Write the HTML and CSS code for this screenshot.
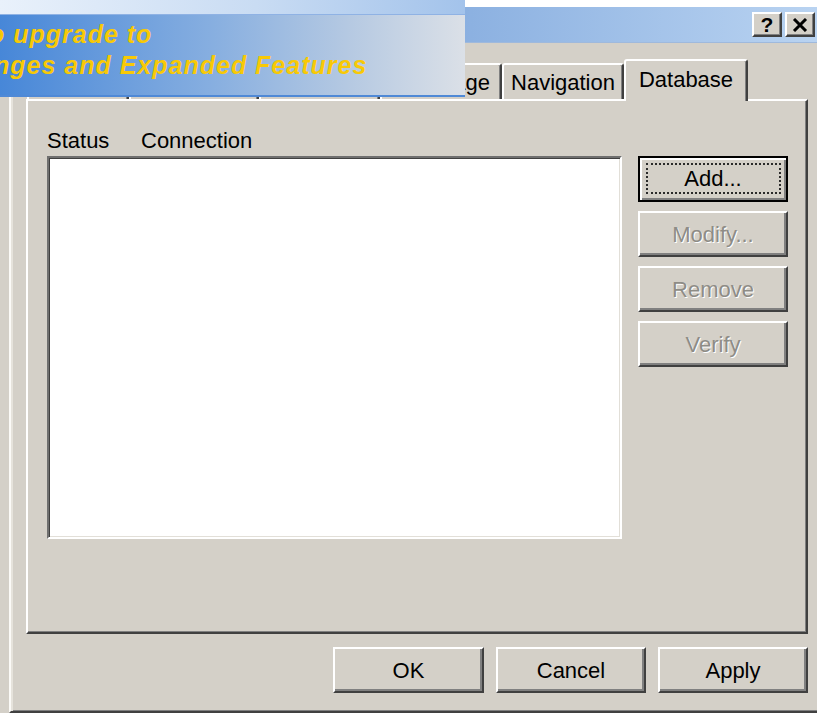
FILE: index.html
```html
<!DOCTYPE html>
<html lang="en">
<head>
<meta charset="utf-8">
<title>Properties</title>
<link rel="stylesheet" href="styles.css">
</head>
<body>
<div class="desk-strip"></div>

<div class="window">
  <div class="titlebar">
    <button class="cap-btn help" type="button">?</button>
    <button class="cap-btn close" type="button" aria-label="Close">
      <svg width="16" height="14" viewBox="0 0 16 14"><path d="M2 1 L14 13 M14 1 L2 13" stroke="#000" stroke-width="3" fill="none"/></svg>
    </button>
  </div>

  <div class="window-body">
    <div class="tabs">
      <div class="tab w1"></div>
      <div class="tab w2"></div>
      <div class="tab w3"></div>
      <div class="tab w4">Language</div>
      <div class="tab w5">Navigation</div>
      <div class="tab w6 active">Database</div>
    </div>

    <div class="panel">
      <div class="list-head">
        <span class="col-status">Status</span>
        <span>Connection</span>
      </div>
      <div class="listbox"></div>
      <div class="side-btns">
        <button class="btn default" type="button">Add...</button>
        <button class="btn" type="button" disabled>Modify...</button>
        <button class="btn" type="button" disabled>Remove</button>
        <button class="btn" type="button" disabled>Verify</button>
      </div>
    </div>

    <div class="footer">
      <button class="btn ok" type="button">OK</button>
      <button class="btn" type="button">Cancel</button>
      <button class="btn" type="button">Apply</button>
    </div>
  </div>
</div>

<div class="promo">
  <div class="promo-top"></div>
  <div class="promo-band">
    <p class="promo-line first">o upgrade to</p>
    <p class="promo-line second">nges and Expanded Features</p>
  </div>
</div>
</body>
</html>
```

FILE: styles.css
```css
* { box-sizing: border-box; }

body {
  margin: 0;
  width: 817px;
  height: 713px;
  overflow: hidden;
  position: relative;
  background: #d4d0c8;
  color: #000;
  font-family: "Liberation Sans", Arial, sans-serif;
  font-size: 22px;
  line-height: 24px;
}

.desk-strip {
  height: 7px;
  background: #fff;
}

/* dialog frame */
.window {
  margin-left: 9px;
  width: 808px;
  height: 706px;
  border-left: 2px solid #fbfaf7;
  border-bottom: 2px solid #404040;
  box-shadow: inset 2px 0 0 #e6e3dc, inset 0 -1px 0 #808080;
  display: flex;
  flex-direction: column;
}

.titlebar {
  height: 36px;
  flex: none;
  display: flex;
  justify-content: flex-end;
  align-items: center;
  gap: 3px;
  padding-right: 2px;
  background: linear-gradient(to right, #3c70c4 0%, #8cb1e1 57%, #b9d3f1 100%);
  border-bottom: 1px solid #9fb9dc;
}

.cap-btn {
  width: 30px;
  height: 25px;
  padding: 0;
  margin: 0;
  display: flex;
  align-items: center;
  justify-content: center;
  background: #d4d0c8;
  border: 2px solid;
  border-color: #fff #404040 #404040 #fff;
  box-shadow: inset -1px -1px 0 #808080;
  font-family: "Liberation Sans", Arial, sans-serif;
  font-weight: 700;
  font-size: 21px;
  line-height: 21px;
  color: #000;
}

.window-body {
  flex: 1;
  display: flex;
  flex-direction: column;
  padding: 16px 9px 0 15px;
}

/* tab strip */
.tabs {
  position: relative;
  z-index: 1;
  display: flex;
  align-items: flex-end;
  height: 42px;
  margin-bottom: -2px;
  padding-left: 1px;
}

.tab {
  height: 36px;
  margin-bottom: 2px;
  padding-top: 6px;
  text-align: center;
  white-space: nowrap;
  overflow: hidden;
  background: #d4d0c8;
  border: 2px solid;
  border-bottom: none;
  border-color: #fff #404040 transparent #fff;
  border-radius: 3px 3px 0 0;
  box-shadow: inset -1px 0 0 #808080;
}

.tab.w1 { width: 102px; }
.tab.w2 { width: 130px; }
.tab.w3 { width: 121px; }
.tab.w4 { width: 122px; }
.tab.w5 { width: 122px; }
.tab.w6 { width: 124px; }

.tab.active {
  height: 42px;
  margin-bottom: 0;
  padding-top: 7px;
}

/* property page */
.panel {
  flex: none;
  height: 535px;
  display: grid;
  grid-template-columns: 575px 150px;
  grid-template-rows: 24px 383px;
  column-gap: 16px;
  row-gap: 3px;
  align-content: start;
  padding: 28px 0 0 19px;
  border: 2px solid;
  border-color: #fff #404040 #404040 #fff;
  box-shadow: inset -1px -1px 0 #808080;
}

.list-head {
  display: flex;
  white-space: nowrap;
}

.col-status { width: 94px; }

.listbox {
  grid-column: 1;
  grid-row: 2;
  background: #fff;
  border: 2px solid;
  border-color: #6f6f6f #fff #fff #6f6f6f;
  box-shadow: inset 1px 1px 0 #404040, inset -1px -1px 0 #e2dfd8;
}

.side-btns {
  grid-column: 2;
  grid-row: 2;
  display: flex;
  flex-direction: column;
  gap: 9px;
}

/* push buttons */
.btn {
  position: relative;
  width: 150px;
  height: 46px;
  margin: 0;
  padding: 2px 0 0;
  background: #d4d0c8;
  border: 2px solid;
  border-color: #fff #404040 #404040 #fff;
  box-shadow: inset -2px -2px 0 #808080;
  font-family: "Liberation Sans", Arial, sans-serif;
  font-size: 22px;
  line-height: 24px;
  color: #000;
}

.btn:disabled {
  color: #8e8c86;
  text-shadow: 1px 1px 0 #fff;
}

.btn.default {
  border-color: #000;
  box-shadow: inset 2px 2px 0 #fff, inset -2px -2px 0 #808080;
  padding: 0 0 1px;
}

.btn.default::after {
  content: "";
  position: absolute;
  inset: 5px 5px 6px 6px;
  border: 2px dotted #2a2a2a;
}

.footer {
  display: flex;
  justify-content: flex-end;
  gap: 12px;
  padding-top: 13px;
}

.footer .btn { padding-top: 1px; }
.footer .ok { width: 151px; }

/* upgrade banner floating over the dialog */
.promo {
  position: absolute;
  z-index: 5;
  left: 0;
  top: 0;
  width: 465px;
  height: 97px;
  overflow: hidden;
}

.promo-top {
  height: 14px;
  background: linear-gradient(to right, #e9f1fb, #c9dcf3 55%, #a3c3eb);
}

.promo-band {
  height: 83px;
  padding-top: 4px;
  overflow: hidden;
  background: linear-gradient(to right, #4787d8 0%, #86aee0 45%, #b5c9e2 75%, #dbe0e7 100%);
  border-top: 1px solid #8fb2e4;
  border-bottom: 2px solid #4f89d6;
}

.promo-line {
  margin: 0;
  white-space: nowrap;
  font-family: "Liberation Sans", Arial, sans-serif;
  font-weight: 700;
  font-style: italic;
  font-size: 25px;
  line-height: 31px;
  letter-spacing: 1px;
  color: #f8c906;
}

.promo-line.first { margin-left: -11px; }
.promo-line.second { margin-left: -6px; }
```
